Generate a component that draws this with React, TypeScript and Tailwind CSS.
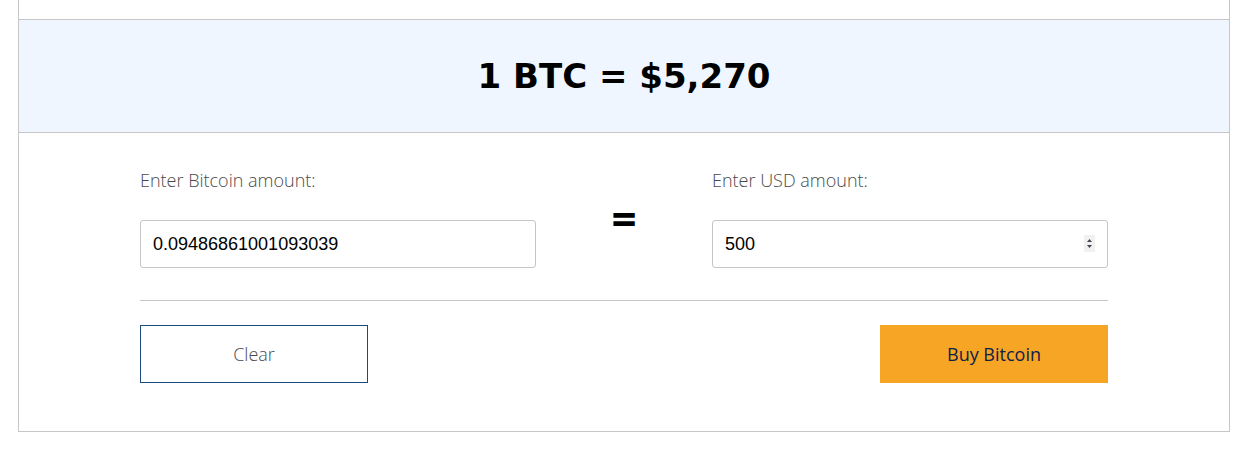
import { useState } from 'react';

const RATE = 5270;

export default function App() {
  const [btc, setBtc] = useState('0.09486861001093039');
  const [usd, setUsd] = useState('500');

  return (
    <div className="min-h-screen bg-white font-['Open_Sans',sans-serif]">
      <div className="ml-[18px] w-[1212px] border-x border-b border-[#c6c6c6] bg-white">
        <div className="h-[19px]" />

        <div className="flex h-[114px] items-center justify-center border-y border-[#c6c6c6] bg-[#f0f6ff]">
          <h1 className="font-['DejaVu_Sans',sans-serif] text-[34px] font-bold leading-none text-black">
            1 BTC = ${RATE.toLocaleString('en-US')}
          </h1>
        </div>

        <div className="px-[121px] pt-[35px] pb-[48px]">
          <div className="flex">
            <div className="w-[396px]">
              <label className="block text-[18px] leading-6 font-light text-[#4a4a4a]">
                Enter Bitcoin amount:
              </label>
              <input
                type="text"
                value={btc}
                onChange={(e) => {
                  setBtc(e.target.value);
                  setUsd(String(Number(e.target.value) * RATE));
                }}
                className="mt-[28px] h-[48px] w-full rounded-[3px] border border-[#c6c6c6] px-3 font-['Liberation_Sans',sans-serif] text-[18px] text-black outline-none"
              />
            </div>

            <div className="flex w-[176px] justify-center pt-[28px]">
              <span className="text-[44px] font-bold leading-none text-black">=</span>
            </div>

            <div className="w-[396px]">
              <label className="block text-[18px] leading-6 font-light text-[#4a4a4a]">
                Enter USD amount:
              </label>
              <div className="relative mt-[28px]">
                <input
                  type="text"
                  value={usd}
                  onChange={(e) => {
                    setUsd(e.target.value);
                    setBtc(String(Number(e.target.value) / RATE));
                  }}
                  className="h-[48px] w-full rounded-[3px] border border-[#c6c6c6] px-3 font-['Liberation_Sans',sans-serif] text-[18px] text-black outline-none"
                />
                <div className="absolute right-[13px] top-[15px] flex h-[17px] w-[11px] flex-col items-center justify-center gap-[3px] bg-[#f0f2f0]">
                  <svg width="5" height="3" viewBox="0 0 5 3">
                    <path d="M2.5 0 L5 3 L0 3 Z" fill="#4a4252" />
                  </svg>
                  <svg width="5" height="3" viewBox="0 0 5 3">
                    <path d="M0 0 L5 0 L2.5 3 Z" fill="#4a4252" />
                  </svg>
                </div>
              </div>
            </div>
          </div>

          <div className="mt-[32px] border-t border-[#c6c6c6]" />

          <div className="mt-[24px] flex justify-between">
            <button
              onClick={() => {
                setBtc('');
                setUsd('');
              }}
              className="h-[58px] w-[228px] border border-[#1d4a80] bg-white text-[18px] font-light text-[#4a4a4a]"
            >
              Clear
            </button>
            <button className="h-[58px] w-[228px] bg-[#f7a525] text-[18px] font-normal text-[#0e2149]">
              Buy Bitcoin
            </button>
          </div>
        </div>
      </div>
    </div>
  );
}
